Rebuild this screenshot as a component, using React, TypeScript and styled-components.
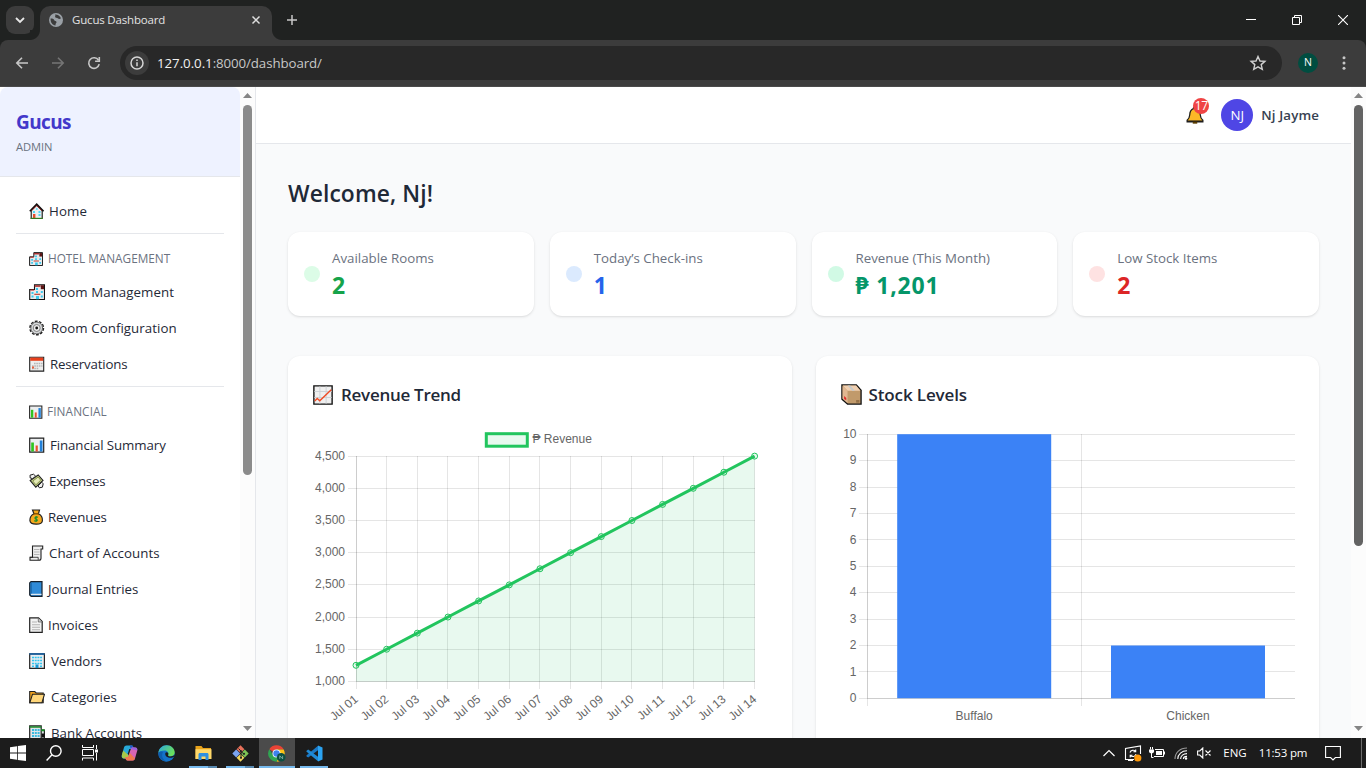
import React from "react";
import styled, { createGlobalStyle } from "styled-components";

const GlobalStyle = createGlobalStyle`
  * { box-sizing: border-box; }
  html, body { margin: 0; padding: 0; overflow: hidden; }
  body { font-family: "Open Sans", "Noto Sans", sans-serif; background: #1c1c1c; }
  svg { display: block; flex: none; }
`;

const Screen = styled.div`
  display: flex;
  flex-direction: column;
  width: 1366px;
  height: 768px;
  overflow: hidden;
`;

const Label = styled.span<{ $size: number; $weight?: number; $color: string; $track?: number; $shift?: number }>`
  font-size: ${(p) => p.$size}px;
  font-weight: ${(p) => p.$weight ?? 400};
  color: ${(p) => p.$color};
  letter-spacing: ${(p) => p.$track ?? 0}px;
  padding-top: ${(p) => p.$shift ?? 0}px;
  line-height: 1.4;
  white-space: nowrap;
`;

/* ---------- browser frame ---------- */

const TabStrip = styled.div`
  display: flex;
  height: 40px;
  flex: none;
  background: #202221;
  padding-left: 6px;
`;

const TabSearch = styled.div`
  display: grid;
  place-items: center;
  width: 28px;
  height: 28px;
  margin: 6px 6px 0 0;
  border-radius: 9px;
  background: #3c3c3c;
`;

const Tab = styled.div`
  display: flex;
  align-items: center;
  position: relative;
  width: 232px;
  height: 34px;
  margin-top: 6px;
  padding: 0 9px 6px 9px;
  border-radius: 10px 10px 0 0;
  background: #3c3c3c;
  &::before, &::after {
    content: "";
    position: absolute;
    bottom: 0;
    width: 10px;
    height: 10px;
  }
  &::before { left: -10px; background: radial-gradient(circle at 0 0, #202221 9.5px, #3c3c3c 10.5px); }
  &::after { right: -10px; background: radial-gradient(circle at 100% 0, #202221 9.5px, #3c3c3c 10.5px); }
`;

const TabTitle = styled.div`
  display: flex;
  flex: 1;
  margin-left: 9px;
`;

const NewTab = styled.div`
  display: grid;
  place-items: center;
  width: 40px;
  height: 40px;
`;

const WindowButtons = styled.div`
  display: flex;
  margin-left: auto;
`;

const WindowButton = styled.div`
  display: grid;
  place-items: center;
  width: 46px;
  height: 40px;
`;

const ToolbarBack = styled.div`
  flex: none;
  height: 47px;
  background: #202221;
`;

const Toolbar = styled.div`
  display: flex;
  align-items: center;
  height: 47px;
  padding: 0 14px 1px 14px;
  border-radius: 8px 8px 0 0;
  border-bottom: 1px solid #4a4a4a;
  background: #3c3c3c;
`;

const ToolButton = styled.div`
  display: grid;
  place-items: center;
  width: 36px;
  height: 34px;
  &:first-child { margin-left: -10px; }
`;

const AddressBar = styled.div`
  display: flex;
  align-items: center;
  width: 1162px;
  height: 34px;
  margin-left: 8px;
  padding: 0 15px 0 5px;
  border-radius: 17px;
  background: #282828;
`;

const SiteInfo = styled.div`
  display: grid;
  place-items: center;
  width: 24px;
  height: 24px;
  margin-right: 8px;
  border-radius: 50%;
  background: #3c3c3c;
`;

const Url = styled.div`
  display: flex;
  flex: 1;
`;

const Profile = styled.div`
  display: grid;
  place-items: center;
  width: 20px;
  height: 20px;
  margin: 0 24px 0 16px;
  border-radius: 50%;
  background: #004d40;
`;

/* ---------- page ---------- */

const Page = styled.div`
  display: flex;
  flex: 1;
  min-height: 0;
  background: #f9fafb;
`;

const Sidebar = styled.aside`
  display: flex;
  width: 256px;
  flex: none;
  border-right: 1px solid #e5e7eb;
  background: #fff;
  overflow: hidden;
`;

const SidebarBody = styled.div`
  width: 240px;
  flex: none;
  height: 651px;
  overflow: hidden;
`;

const Brand = styled.div`
  display: flex;
  flex-direction: column;
  height: 90px;
  padding: 22px 16px 0;
  border-bottom: 1px solid #e5e7eb;
  border-radius: 8px 8px 0 0;
  background: #eef2ff;
`;

const Nav = styled.nav`
  padding: 16px 16px 0;
`;

const NavSection = styled.div`
  margin-top: 4px;
  border-top: 1px solid #e5e7eb;
`;

const NavHeading = styled.div`
  display: flex;
  align-items: center;
  height: 40px;
  padding: 9px 0 0 13px;
`;

const NavItem = styled.div`
  display: flex;
  align-items: center;
  height: 36px;
  padding-left: 13px;
`;

const IconSlot = styled.span<{ $width: number }>`
  display: flex;
  flex: none;
  width: ${(p) => p.$width}px;
`;

const Scrollbar = styled.div`
  display: flex;
  flex-direction: column;
  align-items: center;
  justify-content: space-between;
  width: 15px;
  flex: none;
  padding: 6px 0 7px;
  background: #fcfcfc;
`;

const Thumb = styled.div<{ $height: number; $color: string }>`
  width: 9px;
  height: ${(p) => p.$height}px;
  margin: 7px 0 auto;
  border-radius: 5px;
  background: ${(p) => p.$color};
`;

const Main = styled.main`
  display: flex;
  flex-direction: column;
  flex: 1;
  min-width: 0;
  overflow: hidden;
`;

const TopBar = styled.header`
  display: flex;
  align-items: center;
  justify-content: flex-end;
  height: 57px;
  flex: none;
  padding-right: 32px;
  border-bottom: 1px solid #e5e7eb;
  background: #fff;
`;

const Bell = styled.div`
  position: relative;
  width: 18px;
  margin-right: 17px;
`;

const Badge = styled.span`
  position: absolute;
  top: -8px;
  right: -5px;
  display: grid;
  place-items: center;
  width: 16px;
  height: 16px;
  border-radius: 8px;
  background: #ef4444;
`;

const Avatar = styled.div`
  display: grid;
  place-items: center;
  width: 32px;
  height: 32px;
  margin-right: 8px;
  border-radius: 50%;
  background: #4f46e5;
`;

const Content = styled.div`
  padding: 32px 32px 0;
`;

const Heading = styled.h1`
  display: flex;
  align-items: center;
  height: 36px;
  margin: 0 0 20px;
`;

const Stats = styled.div`
  display: grid;
  grid-template-columns: repeat(4, 1fr);
  gap: 16px;
`;

const Card = styled.div`
  border-radius: 12px;
  background: #fff;
  box-shadow: 0 1px 3px rgba(0, 0, 0, 0.1), 0 1px 2px -1px rgba(0, 0, 0, 0.1);
`;

const StatCard = styled(Card)`
  display: flex;
  align-items: center;
  height: 84px;
  padding: 0 16px;
`;

const Dot = styled.span<{ $color: string }>`
  width: 16px;
  height: 16px;
  margin-right: 12px;
  border-radius: 50%;
  background: ${(p) => p.$color};
`;

const StatText = styled.div`
  display: flex;
  flex-direction: column;
  gap: 2px;
  padding-top: 2px;
`;

const Charts = styled.div`
  display: grid;
  grid-template-columns: repeat(2, minmax(0, 1fr));
  gap: 24px;
  margin-top: 40px;
`;

const ChartCard = styled(Card)`
  height: 400px;
  padding: 24px;
`;

const ChartTitle = styled.div`
  display: flex;
  align-items: center;
  height: 28px;
  margin-bottom: 16px;
  padding: 1px 0 0 1px;
`;

/* ---------- taskbar ---------- */

const Taskbar = styled.footer`
  display: flex;
  height: 30px;
  flex: none;
  background: #1c1c1c;
`;

const TaskButton = styled.div`
  display: flex;
  justify-content: center;
  align-items: center;
  width: 36px;
  height: 30px;
`;

const AppButton = styled(TaskButton)<{ $active?: boolean; $running?: "single" | "multi" }>`
  position: relative;
  margin-right: 1px;
  background: ${(p) => (p.$active ? "#4b4b4b" : "transparent")};
  &::after {
    content: "";
    position: absolute;
    bottom: 0;
    left: ${(p) => (p.$active ? 0 : 4)}px;
    right: ${(p) => (p.$active ? 0 : 4)}px;
    height: 2px;
    background: ${(p) =>
      p.$running === "single"
        ? "#76b9ed"
        : p.$running === "multi"
        ? "linear-gradient(90deg, #76b9ed 19px, #5889b0 19px)"
        : "transparent"};
  }
`;

const AppGroup = styled.div`
  display: flex;
  margin-left: 3px;
`;

const Tray = styled.div`
  display: flex;
  margin-left: auto;
  padding-right: 4px;
`;

const TrayItem = styled.div<{ $width: number }>`
  display: flex;
  align-items: center;
  justify-content: center;
  width: ${(p) => p.$width}px;
`;

const ShowDesktop = styled.div`
  width: 1px;
  margin-left: 5px;
  background: #6b6b6b;
`;

/* ---------- pictograms ---------- */

const art: Record<string, React.ReactNode> = {
  home: (
    <>
      <path d="M2.2 7.5v8h11v-8L7.7 2.2z" fill="#eceff1" stroke="#111" strokeWidth="1.1" />
      <path d="M.8 8.2 7.7 1.2l6.9 7" fill="none" stroke="#111" strokeWidth="1.6" />
      <path d="M2.6 7.600 7.7 2.500l5.100 5.100" fill="none" stroke="#9b2020" strokeWidth=".9" />
      <path d="M7 5.200h1.600v1.600H7zM9.500 8h2v2h-2zM9.500 11h2v2h-2zM4 8h2v2H4z" fill="#4fd8f5" />
      <path d="M4 11h2.400v4H4z" fill="#e74c2c" />
      <path d="M1.500 15.300h12.400" stroke="#3d9426" strokeWidth="1" />
    </>
  ),
  hotel: (
    <>
      <path d="M5.500.7h10v14.8H.7V5.500h4.800z" fill="#e7eaec" stroke="#111" strokeWidth="1.1" />
      <path d="M5.500 1.200h6v1.600h-6z" fill="#a52a2a" />
      <path d="M11.800 1.200h3.200v4h-3.200z" fill="#5b1414" />
      <path d="M1.200 5.500h4v1.100h-4z" fill="#b33" />
      <path d="M7 4h2v2H7zM7 7h2v2H7zM2.500 8h2v2h-2zM2.500 11.500h2v2h-2zM11.800 7h2v2h-2zM11.800 11.500h2v2h-2zM7 12h3v3.200H7z" fill="#39c9ee" />
      <path d="M5.300 10.300h6" stroke="#c0392b" strokeWidth="1.1" />
    </>
  ),
  gear: (
    <>
      <circle cx="7.7" cy="8" r="6.800" fill="none" stroke="#222" strokeWidth="1.400" strokeDasharray="2.800 1.470" />
      <circle cx="7.7" cy="8" r="5.900" fill="#d6d8da" stroke="#444" strokeWidth=".8" />
      <circle cx="7.7" cy="8" r="3.500" fill="#eee" stroke="#777" strokeWidth=".9" />
      <circle cx="7.7" cy="8" r="1.400" fill="#111" />
    </>
  ),
  calendar: (
    <>
      <path d="M.7 1.200h14v13.900H.7z" fill="#eee" stroke="#222" strokeWidth="1.100" />
      <path d="M1.200 1.600h13v3.200h-13z" fill="#e8401c" />
      <path d="M5 7.500h8.500M3 10h10.500M3 12.500h7" stroke="#b5b5b5" strokeWidth="1.300" strokeDasharray="1.600 .7" />
      <path d="M3 10.500h2v2H3z" fill="#e8603c" />
    </>
  ),
  chart: (
    <>
      <path d="M.7 1.200h14v13.900H.7z" fill="#eceef0" stroke="#222" strokeWidth="1.200" />
      <path d="M2.200 5.500h2.700v9H2.200z" fill="#2fc41f" />
      <path d="M6.600 8.500h2.200v6H6.600z" fill="#e8502c" />
      <path d="M10.800 3.500h2.700v11h-2.700z" fill="#2180d8" />
    </>
  ),
  cashWings: (
    <>
      <path d="m1.200 7.500 8-5.500 4.800 5.500-7.200 6.700z" fill="#c4d08a" stroke="#222" strokeWidth="1.100" />
      <path d="M3.800 8 9.200 4l2.500 3.200-4.800 4.600z" fill="#e6ecb8" stroke="#76823a" strokeWidth=".8" />
      <path d="M1 2.200 4.500 1.200l2.200 2L3.600 5.600 1.200 5zM9 12.800l3.800-3.600 1.400 1.600-.8 3.400-3 .6z" fill="#f1f1f1" stroke="#222" strokeWidth="1" />
    </>
  ),
  moneyBag: (
    <>
      <path d="M3.500 1h7L9.400 4.800c3 1.400 4.200 4.300 4 6.900-.2 2.700-2 3.500-6.200 3.500S1 14.300.9 11.600C.8 9 2 6.200 5 4.800z" fill="#f5a81c" stroke="#222" strokeWidth="1.200" />
      <path d="M4.400 4.800h5.600" stroke="#7a4a00" strokeWidth="1.300" />
      <path d="M9 8.300c-2.500-1-4.200.8-2 1.700s1.500 3-2 1.800M7.100 7.100v6" fill="none" stroke="#1d8f2a" strokeWidth="1.200" />
    </>
  ),
  scroll: (
    <>
      <path d="M3.500 1h10.200v3H12v9.200c0 1.600-1 2-2 2H1v-3h2.500z" fill="#eee" stroke="#222" strokeWidth="1.100" />
      <path d="M5 4.500h5.500M5 7h5.500M5 9.500h5.500" stroke="#b5b5b5" strokeWidth="1" />
      <path d="M1 12.300h8.200v2.600" fill="none" stroke="#222" strokeWidth=".8" />
    </>
  ),
  book: (
    <>
      <path d="M.7 2 2 .7h11v14.600H2.200L.7 14z" fill="#2f8bd8" stroke="#17202a" strokeWidth="1.200" />
      <path d="M2 13.400h10.500" stroke="#dfe9f2" strokeWidth="1.300" />
      <path d="M2.200 1.500v11" stroke="#1766ab" strokeWidth="1.100" />
    </>
  ),
  page: (
    <>
      <path d="M.7.8h8.800l3.700 3.800v10.700H.7z" fill="#f2f2f2" stroke="#222" strokeWidth="1.200" />
      <path d="M9.300 1v4h3.800" fill="#ccc" stroke="#555" strokeWidth=".7" />
      <path d="M3 5h5M3 7.700h8M3 10.200h8M3 12.700h8" stroke="#b3b3b3" strokeWidth="1.100" />
    </>
  ),
  office: (
    <>
      <path d="M.7.8h14.700v14.600H.7z" fill="#e9edf0" stroke="#222" strokeWidth="1.200" />
      <path d="M.4 1h15.200" stroke="#1763a8" strokeWidth="1.600" />
      <path d="M3 4.500h10M3 7.500h10M3 10.500h10M3 13.200h2M11 13.200h2" stroke="#33c4ee" strokeWidth="1.600" strokeDasharray="2 .7" />
      <path d="M6.500 11.500h3v3.600h-3z" fill="#1595d3" />
    </>
  ),
  folder: (
    <>
      <path d="M.7 2.500h5l1.500 1.500h7v9.700H.7z" fill="#f0a21c" stroke="#222" strokeWidth="1.100" />
      <path d="M3.500 5.200h12l-2.600 8.600H.8z" fill="#ffd679" stroke="#222" strokeWidth="1.100" />
    </>
  ),
  bank: (
    <>
      <path d="M.7.8h11.500v14.600H.7zM12.200 5h3.200v10.400h-3.200z" fill="#dfe5e8" stroke="#222" strokeWidth="1.200" />
      <path d="M.4 1.300h12v1.400H.4zM12 4.200h3.600v2H12z" fill="#1d8a2a" />
      <path d="M3 5h8M3 8h8M3 11h8" stroke="#39b9de" strokeWidth="1.800" strokeDasharray="2 .8" />
      <path d="M12.500 8.500h3v4h-3z" fill="#111" />
    </>
  ),
  trend: (
    <>
      <path d="M.7.7h14.600v14.600H.7z" fill="#efefef" stroke="#111" strokeWidth="1.100" />
      <path d="M5.500 1v14M10.500 1v14M1 5.200h14M1 10h14" stroke="#c9ced2" strokeWidth=".7" />
      <path d="m1.400 12.800 2-2 2 1.800 9.200-8.800" fill="none" stroke="#f04a23" strokeWidth="1.100" />
    </>
  ),
  box: (
    <>
      <path d="M.7.7h11l3.600 4v10.600H5L.7 11.500z" fill="#c19a6b" stroke="#111" strokeWidth="1" />
      <path d="M1.200 1.200h10.300l3.200 3.900H5z" fill="#f0cfb0" />
      <path d="M1.200 1.500 5 5.200v9.500L1.200 11.200z" fill="#e0b791" />
      <path d="m5 1.200 3.600 4h2L7 1.200z" fill="#c6c9c9" />
      <path d="M2.400 9.200 4 10.600v1.800l-1.600-1z" fill="#e02828" />
      <path d="M11.500 12.200h2.500v2h-2.500z" fill="#957148" />
    </>
  ),
  bell: (
    <>
      <path d="M8 .8c1 0 1.500.7 1.400 1.600C12 3.300 12.600 5.500 12.700 8c.1 2 .8 3.300 2.300 4.600v1.600H1v-1.600C2.500 11.300 3.200 10 3.300 8c.1-2.500.7-4.700 3.300-5.600C6.500 1.500 7 .8 8 .8z" fill="#fcb827" stroke="#1c1c1c" strokeWidth="1.100" />
      <path d="M1 13.500h14" stroke="#1c1c1c" strokeWidth="1.300" />
      <path d="M6 14.800h4" stroke="#5a3c00" strokeWidth="1.800" />
    </>
  ),
};

const Pictogram = ({ name, size = 16 }: { name: string; size?: number }) => (
  <svg width={size} height={size} viewBox="0 0 16 16">
    {art[name]}
  </svg>
);

const Arrow = ({ down }: { down?: boolean }) => (
  <svg width="9" height="5" viewBox="0 0 9 5">
    <path d={down ? "M0 0h9L4.5 5z" : "M0 5h9L4.5 0z"} fill="#858585" />
  </svg>
);

/* ---------- data ---------- */

type Entry = [icon: string, slot: number, text: string, track: number];

const hotelItems: Entry[] = [
  ["hotel", 22, "Room Management", 0.05],
  ["gear", 22, "Room Configuration", 0.05],
  ["calendar", 21, "Reservations", -0.17],
];

const financeItems: Entry[] = [
  ["chart", 21, "Financial Summary", -0.1],
  ["cashWings", 20, "Expenses", -0.25],
  ["moneyBag", 19, "Revenues", -0.15],
  ["scroll", 20, "Chart of Accounts", 0.03],
  ["book", 19, "Journal Entries", 0],
  ["page", 19, "Invoices", 0],
  ["office", 22, "Vendors", -0.1],
  ["folder", 22, "Categories", 0],
  ["bank", 22, "Bank Accounts", 0],
];

const stats = [
  { label: "Available Rooms", value: "2", dot: "#dcfce7", color: "#16a34a" },
  { label: "Today’s Check-ins", value: "1", dot: "#dbeafe", color: "#2563eb" },
  { label: "Revenue (This Month)", value: "₱ 1,201", dot: "#d1fae5", color: "#059669" },
  { label: "Low Stock Items", value: "2", dot: "#fee2e2", color: "#dc2626" },
];

const NavRow = ({ entry: [icon, slot, text, track] }: { entry: Entry }) => (
  <NavItem>
    <IconSlot $width={slot}>
      <Pictogram name={icon} />
    </IconSlot>
    <Label $size={13.3} $color="#1f2937" $track={track}>{text}</Label>
  </NavItem>
);

/* ---------- charts ---------- */

const chartFont = { fontFamily: '"Liberation Sans", Arial, sans-serif', fontSize: 12, fill: "#666" };
const crisp = (v: number) => Math.floor(v) + 0.5;

const RevenueChart = () => {
  const px = (i: number) => 356 + i * 30.66;
  const py = (v: number) => 681.4 - ((v - 1000) / 500) * 32.18;
  const days = Array.from({ length: 14 }, (_, i) => i);
  const ticks = [1000, 1500, 2000, 2500, 3000, 3500, 4000, 4500];
  const points = days.map((i) => [px(i), py(1250 + i * 250)]);
  const line = points.map(([x, y]) => `${x},${y}`).join(" ");
  return (
    <svg width="455" height="314" viewBox="312 424 455 314">
      {ticks.map((t) => (
        <line key={t} x1="348" x2="755" y1={crisp(py(t))} y2={crisp(py(t))} stroke="rgba(0,0,0,.1)" />
      ))}
      {days.map((i) => (
        <line key={i} x1={crisp(px(i))} x2={crisp(px(i))} y1="456" y2="689" stroke="rgba(0,0,0,.1)" />
      ))}
      <path d="M356.5 456v225.5H755" fill="none" stroke="rgba(0,0,0,.1)" />
      <polygon points={`356,681.5 ${line} 754.6,681.5`} fill="rgba(34,197,94,.1)" />
      <polyline points={line} fill="none" stroke="#22c55e" strokeWidth="3" />
      {points.map(([x, y]) => (
        <circle key={x} cx={x} cy={y} r="3" fill="rgba(34,197,94,.1)" stroke="#22c55e" />
      ))}
      <rect x="486.3" y="433.7" width="41" height="12.5" fill="rgba(34,197,94,.1)" stroke="#22c55e" strokeWidth="3" />
      <text x="532.5" y="443" {...chartFont}>₱ Revenue</text>
      {ticks.map((t) => (
        <text key={t} x="345" y={py(t) + 3.5} textAnchor="end" {...chartFont}>{t.toLocaleString("en-US")}</text>
      ))}
      {days.map((i) => (
        <text key={i} transform={`translate(${px(i) - 3} 693.5) rotate(-40)`} y="9" textAnchor="end" {...chartFont}>
          {`Jul ${String(i + 1).padStart(2, "0")}`}
        </text>
      ))}
    </svg>
  );
};

const StockChart = () => {
  const py = (v: number) => 698.4 - v * 26.42;
  const ticks = Array.from({ length: 11 }, (_, i) => i);
  return (
    <svg width="455" height="314" viewBox="840 424 455 314">
      {ticks.map((t) => (
        <line key={t} x1="859" x2="1295" y1={crisp(py(t))} y2={crisp(py(t))} stroke="rgba(0,0,0,.1)" />
      ))}
      {[867.5, 1081.5].map((x) => (
        <line key={x} x1={x} x2={x} y1="434" y2="706" stroke="rgba(0,0,0,.1)" />
      ))}
      <path d="M867.5 434v264.5H1295" fill="none" stroke="rgba(0,0,0,.1)" />
      <rect x="897.2" y="434.2" width="154" height="264" fill="#3b82f6" />
      <rect x="1111" y="645.5" width="154" height="52.8" fill="#3b82f6" />
      {ticks.map((t) => (
        <text key={t} x="856.5" y={py(t) + 3.7} textAnchor="end" {...chartFont}>{t}</text>
      ))}
      <text x="974.2" y="720" textAnchor="middle" {...chartFont}>Buffalo</text>
      <text x="1188" y="720" textAnchor="middle" {...chartFont}>Chicken</text>
    </svg>
  );
};

/* ---------- sections ---------- */

const Browser = () => (
  <>
    <TabStrip>
      <TabSearch>
        <svg width="10" height="10" viewBox="0 0 10 10" fill="none" stroke="#e8e8e8" strokeWidth="1.8">
          <path d="m1 3 4 4 4-4" />
        </svg>
      </TabSearch>
      <Tab>
        <svg width="14" height="14" viewBox="0 0 14 14">
          <circle cx="7" cy="7" r="7" fill="#9aa0a6" />
          <path d="M1.6 5.5c2.4 0 3.4.5 3.7 1.800.2 1 2 .4 2.200 1.600.2 1-1.200 1.200-1 3.500-3-.3-5.200-2.800-4.900-6.900zM6 1.500c2.500-.2 5 1.300 6 3.800-1.200 1-2.500.7-3.200 0-.8-.8-2.500-.3-2.700-1.400-.1-.8.8-1.200-.1-2.400z" fill="#3c3c3c" />
        </svg>
        <TabTitle>
          <Label $size={11.5} $color="#e3e3e3" $track={-0.18} $shift={1}>Gucus Dashboard</Label>
        </TabTitle>
        <svg width="14" height="10" viewBox="0 0 14 10" stroke="#dedede" strokeWidth="1.5">
          <path d="m3.500 1.500 7 7m0-7-7 7" />
        </svg>
      </Tab>
      <NewTab>
        <svg width="12" height="12" viewBox="0 0 12 12" stroke="#c7c7c7" strokeWidth="1.5">
          <path d="M6 1v10M1 6h10" />
        </svg>
      </NewTab>
      <WindowButtons>
        <WindowButton>
          <svg width="10" height="10" viewBox="0 0 10 10" stroke="#fff"><path d="M0 4.5h10" /></svg>
        </WindowButton>
        <WindowButton>
          <svg width="10" height="10" viewBox="0 0 10 10" fill="none" stroke="#fff">
            <path d="M.5 2.500h7v7h-7zM2.500 2.500v-2h7v7h-2" />
          </svg>
        </WindowButton>
        <WindowButton>
          <svg width="10" height="10" viewBox="0 0 10 10" stroke="#fff" strokeWidth="1.1"><path d="m0 0 10 10m0-10-10 10" /></svg>
        </WindowButton>
      </WindowButtons>
    </TabStrip>
    <ToolbarBack>
      <Toolbar>
        <ToolButton>
          <svg width="14" height="12" viewBox="0 0 14 12" fill="none" stroke="#c7c7c7" strokeWidth="1.6"><path d="M13 6H2M7 .8 1.800 6 7 11.200" /></svg>
        </ToolButton>
        <ToolButton>
          <svg width="14" height="12" viewBox="0 0 14 12" fill="none" stroke="#757575" strokeWidth="1.6"><path d="M1 6h11M7 .8 12.200 6 7 11.200" /></svg>
        </ToolButton>
        <ToolButton>
          <svg width="14" height="14" viewBox="0 0 14 14" fill="none" stroke="#c7c7c7" strokeWidth="1.6">
            <path d="M12.200 8.200A5.300 5.300 0 1 1 11.500 4.200" />
            <path d="M12.300 1v4.200H8.100" />
          </svg>
        </ToolButton>
        <AddressBar>
          <SiteInfo>
            <svg width="14" height="14" viewBox="0 0 14 14" fill="none" stroke="#d6d6d6" strokeWidth="1.5">
              <circle cx="7" cy="7" r="6" />
              <path d="M7 6.200v4M7 3.600v1.500" />
            </svg>
          </SiteInfo>
          <Url>
            <Label $size={13.3} $color="#f1f1f1" $track={-0.05} $shift={1}>127.0.0.1</Label>
            <Label $size={13.3} $color="#c7c7c7" $track={-0.1} $shift={1}>:8000/dashboard/</Label>
          </Url>
          <svg width="18" height="16" viewBox="0 0 18 16" fill="none" stroke="#d0d0d0" strokeWidth="1.4">
            <path d="m9 1.500 2 4.500 4.900.4-3.700 3.200 1.100 4.800L9 11.900l-4.300 2.500 1.100-4.800L2.100 6.400 7 6z" />
          </svg>
        </AddressBar>
        <Profile>
          <Label $size={10.5} $color="#fff">N</Label>
        </Profile>
        <svg width="4" height="14" viewBox="0 0 4 14" fill="#c7c7c7">
          <circle cx="2" cy="1.7" r="1.500" />
          <circle cx="2" cy="7" r="1.500" />
          <circle cx="2" cy="12.3" r="1.500" />
        </svg>
      </Toolbar>
    </ToolbarBack>
  </>
);

const SideNav = () => (
  <Sidebar>
    <SidebarBody>
      <Brand>
        <Label $size={19} $weight={700} $color="#4338ca" $track={-0.6}>Gucus</Label>
        <Label $size={11.2} $color="#6b7280" $shift={3} $track={-0.1}>ADMIN</Label>
      </Brand>
      <Nav>
        <NavRow entry={["home", 20, "Home", 0.1]} />
        <NavSection>
          <NavHeading>
            <IconSlot $width={19}><Pictogram name="hotel" size={14} /></IconSlot>
            <Label $size={11.8} $weight={500} $color="#6b7280" $track={0}>HOTEL MANAGEMENT</Label>
          </NavHeading>
          {hotelItems.map((e) => <NavRow key={e[2]} entry={e} />)}
        </NavSection>
        <NavSection>
          <NavHeading>
            <IconSlot $width={18}><Pictogram name="chart" size={14} /></IconSlot>
            <Label $size={11.8} $weight={500} $color="#6b7280" $track={0.1}>FINANCIAL</Label>
          </NavHeading>
          {financeItems.map((e) => <NavRow key={e[2]} entry={e} />)}
        </NavSection>
      </Nav>
    </SidebarBody>
    <Scrollbar>
      <Arrow />
      <Thumb $height={370} $color="#8b8b8b" />
      <Arrow down />
    </Scrollbar>
  </Sidebar>
);

const Dashboard = () => (
  <Main>
    <TopBar>
      <Bell>
        <Pictogram name="bell" size={18} />
        <Badge><Label $size={12} $color="#fff" $track={-0.3}>17</Label></Badge>
      </Bell>
      <Avatar><Label $size={13.3} $color="#fff">NJ</Label></Avatar>
      <Label $size={13.3} $weight={600} $color="#374151" $track={0.12}>Nj Jayme</Label>
    </TopBar>
    <Content>
      <Heading><Label $size={22.8} $weight={600} $color="#1f2937" $track={0.12}>Welcome, Nj!</Label></Heading>
      <Stats>
        {stats.map((s) => (
          <StatCard key={s.label}>
            <Dot $color={s.dot} />
            <StatText>
              <Label $size={13.3} $color="#6b7280">{s.label}</Label>
              <Label $size={23} $weight={700} $color={s.color} $track={0.8}>{s.value}</Label>
            </StatText>
          </StatCard>
        ))}
      </Stats>
      <Charts>
        <ChartCard>
          <ChartTitle>
            <IconSlot $width={28}><Pictogram name="trend" size={20} /></IconSlot>
            <Label $size={17} $weight={600} $color="#1f2937" $track={-0.28}>Revenue Trend</Label>
          </ChartTitle>
          <RevenueChart />
        </ChartCard>
        <ChartCard>
          <ChartTitle>
            <IconSlot $width={28}><Pictogram name="box" size={21} /></IconSlot>
            <Label $size={17} $weight={600} $color="#1f2937" $track={-0.12}>Stock Levels</Label>
          </ChartTitle>
          <StockChart />
        </ChartCard>
      </Charts>
    </Content>
  </Main>
);

const SystemBar = () => (
  <Taskbar>
    <TaskButton>
      <svg width="16" height="16" viewBox="0 0 16 16" fill="#fff">
        <path d="M0 2.200 7 1.200v6.400H0zM7.800 1.100 16 0v7.600H7.800zM0 8.400h7v6.400L0 13.800zM7.800 8.400H16V16l-8.200-1.100z" />
      </svg>
    </TaskButton>
    <TaskButton>
      <svg width="16" height="16" viewBox="0 0 16 16" fill="none" stroke="#fff" strokeWidth="1.4">
        <circle cx="9.8" cy="6" r="5.300" />
        <path d="M6 9.800.6 15.400" />
      </svg>
    </TaskButton>
    <TaskButton>
      <svg width="16" height="16" viewBox="0 0 16 16" fill="none" stroke="#fff">
        <path d="M.5 0v2.500h11V0M.5 4.500h11v6H.5zM.5 15.500v-2.500h11v2.500M14.500 0v4M14.500 8v7.500" />
        <path d="M13 4.500h3v3h-3z" fill="#fff" stroke="none" />
      </svg>
    </TaskButton>
    <AppGroup>
      <AppButton>
        <svg width="17" height="16" viewBox="0 0 17 16">
          <path d="M5.500.5h5c1 0 1.500.7 1.800 1.700l.5 1.800H10L7.300 12c-.4 1-1 1.500-2 1.500H3C1 13.500.3 12 .8 10.200L3 2.600C3.400 1.200 4.200.5 5.500.5z" fill="#28a9d9" />
          <path d="M1 9.500 2.200 5.500 7.800 10.500 7 12.500c-.4.700-1 1-1.700 1H3c-1.600 0-2.600-1.200-2-4z" fill="#a8c948" />
          <path d="M8.800.5h1.700c1 0 1.500.7 1.800 1.700l.5 1.800h-3z" fill="#2456c9" />
          <path d="M11.500 15.500h-5c-1 0-1.500-.7-1.800-1.700L4.200 12H7l2.700-8c.4-1 1-1.500 2-1.500H14c2 0 2.700 1.500 2.200 3.300L14 13.400c-.4 1.400-1.200 2.100-2.500 2.100z" fill="#d765b3" />
          <path d="M4.200 12H7l1.500-4.500 5.500 6c-.5 1.300-1.200 2-2.500 2h-5c-1.500 0-1.800-1.500-2.300-3.500z" fill="#f0784e" />
          <path d="M9.700 4c.4-1 1-1.500 2-1.500H14c2 0 2.600 1.500 2.200 3.100z" fill="#9a63dd" />
          <path d="M6.800 8.500 8.300 4h1.400L7.500 10.500z" fill="#1c1c1c" />
        </svg>
      </AppButton>
      <AppButton>
        <svg width="17" height="17" viewBox="0 0 17 17">
          <defs>
            <linearGradient id="edgeTop" x1="0" y1="0" x2="1" y2=".5">
              <stop offset="0" stopColor="#2aa8e0" />
              <stop offset="1" stopColor="#6be05a" />
            </linearGradient>
          </defs>
          <circle cx="8.5" cy="8.5" r="8.200" fill="#1372c9" />
          <path d="M.3 8C.8 3.500 4.400.3 8.700.3c4.700 0 8 3.400 8 7 0 2.500-1.800 4-4.200 4-1.700 0-2.800-.6-2.300-1.500.8-1.600-.4-4.400-3.700-4.400C3.500 5.400 1 6.500.3 8z" fill="url(#edgeTop)" />
          <path d="M5 7c-2.500 4 .5 9.500 5.500 9.400C4.500 17.500.2 13 .3 8.200 1.500 6.500 3.500 6 5 7z" fill="#0f5dac" />
          <path d="M7.500 7.800c-.8 1.800.2 4.600 4.200 4.900 1.800.1 3.200-.3 4-.7l1.300-2-3 1.300c-1.700.3-3.900 0-4-.9 0-.6.5-1 .3-1.900-.2-1-1.900-2-2.800-.7z" fill="#1c1c1c" />
        </svg>
      </AppButton>
      <AppButton $running="multi">
        <svg width="17" height="16" viewBox="0 0 17 16">
          <path d="M.5 1h6l1.500 2H16v11H.5z" fill="#e8a21a" />
          <path d="M.5 4.200H16.500V14H.5z" fill="#ffd869" />
          <path d="M3.500 15V9.500c0-1 .5-1.500 1.500-1.500h7c1 0 1.500.5 1.500 1.500V15h-3v-3.500h-4V15z" fill="#2f8fe0" />
        </svg>
      </AppButton>
      <AppButton $running="multi">
        <svg width="17" height="17" viewBox="0 0 17 17">
          <path d="m8.500.3 3.900 3.900-3.900 3.900-3.900-3.900z" fill="#e8705a" />
          <path d="m4.200 4.600 3.900 3.900-3.900 3.900L.3 8.500z" fill="#7ba4f0" />
          <path d="m12.800 4.600 3.900 3.900-3.900 3.900-3.900-3.900z" fill="#7cc455" />
          <path d="m8.500 8.900 3.900 3.900-3.900 3.900-3.900-3.900z" fill="#f2d75c" />
          <path d="M6.500 3.500 9 6v7M9 6.500l3 2.500" stroke="#222" strokeWidth="1" fill="none" />
          <circle cx="9" cy="12.8" r="1.100" fill="#222" />
          <circle cx="12" cy="8.8" r="1.100" fill="#222" />
          <circle cx="8.8" cy="6" r="1.100" fill="#222" />
        </svg>
      </AppButton>
      <AppButton $active $running="single">
        <svg width="18" height="17" viewBox="0 0 18 17">
          <path d="M8.500.3a8.200 8.200 0 0 1 7.200 4.200H8.500L5 6.500 1.300 4.300A8.200 8.200 0 0 1 8.500.3z" fill="#ea4335" />
          <path d="M8.500 4.500h7.200A8.200 8.200 0 0 1 8.500 16.700L12 10z" fill="#fbc116" />
          <path d="M1.300 4.300 5.200 10.500l6.400.2-3.100 6A8.200 8.200 0 0 1 1.300 4.300z" fill="#30a552" />
          <circle cx="8.5" cy="8.5" r="4" fill="#fff" />
          <circle cx="8.5" cy="8.5" r="3.200" fill="#3d82ee" />
          <circle cx="13.200" cy="12.2" r="4.300" fill="#0b4f42" />
          <path d="M11.800 13.800v-3l2.800 3v-3" fill="none" stroke="#8fb8af" strokeWidth=".8" />
        </svg>
      </AppButton>
      <AppButton $running="single">
        <svg width="17" height="17" viewBox="0 0 17 17">
          <path d="M12 .8v4.400L2.200 12.400.6 11.200c-.3-.3-.3-.7 0-1z" fill="#1b78c4" />
          <path d="M12 16.200v-4.400L2.200 4.600.6 5.800c-.3.3-.3.7 0 1z" fill="#1f8ad6" />
          <path d="m12 .5 4.500 2v12l-4.500 2z" fill="#2ba3f1" />
        </svg>
      </AppButton>
    </AppGroup>
    <Tray>
      <TrayItem $width={22}>
        <svg width="12" height="8" viewBox="0 0 12 8" fill="none" stroke="#fff" strokeWidth="1.2"><path d="m.5 7 5.500-5.500L11.500 7" /></svg>
      </TrayItem>
      <TrayItem $width={26}>
        <svg width="18" height="17" viewBox="0 0 18 17" fill="none" stroke="#fff" strokeWidth="1.1">
          <path d="M10 14.500H1.500v-11L16.500 1v8M4 15.500h5" />
          <path d="M6 7.500a3.200 3.200 0 0 1 5.500-1M11.700 4.500v2.300H9.400M12 9a3.200 3.200 0 0 1-5.500 1.500M6.200 12.500v-2.300h2.300" />
          <circle cx="13.8" cy="13" r="3.600" fill="#ff9a0a" stroke="none" />
        </svg>
      </TrayItem>
      <TrayItem $width={22}>
        <svg width="16" height="12" viewBox="0 0 16 12" fill="none" stroke="#fff">
          <path d="M6 2.500h8.500v7H5M15.500 4.500v3" />
          <path d="M7 4h6v4H7z" fill="#fff" stroke="none" />
          <path d="M1.500 0v2.500M3.500 0v2.500M2.500 6v4.500h2" />
          <path d="M0 2.500h5v2c0 1-1 1.800-2.500 1.800S0 5.500 0 4.500z" fill="#fff" stroke="none" />
        </svg>
      </TrayItem>
      <TrayItem $width={26}>
        <svg width="14" height="14" viewBox="0 0 14 14" fill="none" stroke="#fff" strokeWidth="1.1">
          <path d="M1 13C1 6.500 6 2 13 2" stroke="#999" />
          <path d="M3.800 13C3.800 8.200 7.800 4.800 13 4.800M6.600 13c0-3.200 2.800-5.400 6.400-5.400M9.400 13c0-1.600 1.600-2.600 3.600-2.600" />
          <circle cx="12" cy="12.5" r="1.200" fill="#fff" stroke="none" />
        </svg>
      </TrayItem>
      <TrayItem $width={20}>
        <svg width="15" height="12" viewBox="0 0 15 12" fill="none" stroke="#fff" strokeWidth="1.1">
          <path d="M.6 4h2.200L5.800 1v10L2.800 8H.6zM8.500 3.500l5 5m0-5-5 5" />
        </svg>
      </TrayItem>
      <TrayItem $width={42}><Label $size={11.5} $color="#fff">ENG</Label></TrayItem>
      <TrayItem $width={54}><Label $size={11.5} $color="#fff" $track={-0.2}>11:53 pm</Label></TrayItem>
      <TrayItem $width={46}>
        <svg width="16" height="16" viewBox="0 0 16 16" fill="none" stroke="#fff" strokeWidth="1.1">
          <path d="M.6 1.500h14.800v11h-5L8 15l-2.400-2.500h-5z" />
        </svg>
      </TrayItem>
      <ShowDesktop />
    </Tray>
  </Taskbar>
);

export default function App() {
  return (
    <Screen>
      <GlobalStyle />
      <Browser />
      <Page>
        <SideNav />
        <Dashboard />
        <Scrollbar>
          <Arrow />
          <Thumb $height={441} $color="#636363" />
          <Arrow down />
        </Scrollbar>
      </Page>
      <SystemBar />
    </Screen>
  );
}
